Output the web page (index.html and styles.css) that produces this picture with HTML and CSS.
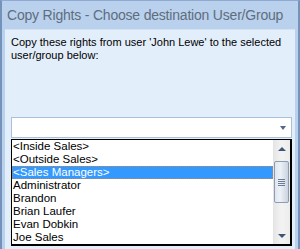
FILE: index.html
```html
<!DOCTYPE html>
<html lang="en">
<head>
    <meta charset="UTF-8">
    <title>Copy Rights</title>
    <link rel="stylesheet" href="styles.css">
</head>
<body>
<div class="window">
    <div class="titlebar">Copy Rights - Choose destination User/Group</div>

    <div class="panel">
        <p class="prompt">Copy these rights from user 'John Lewe' to the selected user/group below:</p>

        <!-- Filter box -->
        <div class="combo">
            <span class="combo-arrow"></span>
        </div>

        <!-- Users and groups -->
        <div class="listbox">
            <div class="items">
                <div class="item">&lt;Inside Sales&gt;</div>
                <div class="item">&lt;Outside Sales&gt;</div>
                <div class="item selected">&lt;Sales Managers&gt;</div>
                <div class="item">Administrator</div>
                <div class="item">Brandon</div>
                <div class="item">Brian Laufer</div>
                <div class="item">Evan Dobkin</div>
                <div class="item">Joe Sales</div>
            </div>
            <div class="scrollbar">
                <span class="scroll-btn up"></span>
                <div class="track">
                    <div class="thumb">
                        <span class="grip"></span>
                    </div>
                </div>
                <span class="scroll-btn down"></span>
            </div>
        </div>
    </div>
</div>
</body>
</html>
```

FILE: styles.css
```css
body {
    margin: 0;
    width: 300px;
    height: 249px;
    overflow: hidden;
    background-color: #b9d1ec;
}
.window {
    height: 249px;
    box-sizing: border-box;
    border-left: 2px solid #7592bb;
    border-right: 2px solid #7592bb;
    border-top: 1px solid #8eaad0;
    background-color: #b9d1ec;
    padding: 0 3px;
}
.titlebar {
    height: 28px;
    box-sizing: border-box;
    padding: 6px 0 0 2px;
    font-family: "Liberation Sans", Arial, sans-serif;
    font-size: 14px;
    letter-spacing: -0.2px;
    color: #5f6d80;
    white-space: nowrap;
}
.panel {
    height: 220px;
    box-sizing: border-box;
    background-color: #e3eefb;
    border-top: 1px solid #d4e2f4;
    padding: 6px 3px 0 6px;
    font-family: "Liberation Sans", Arial, sans-serif;
    font-size: 11px;
    color: #000;
}
.prompt {
    margin: 0;
    line-height: 13px;
    height: 81px;
}
.combo {
    height: 19px;
    background-color: #fff;
    border: 1px solid #abc0db;
    position: relative;
}
.combo-arrow {
    position: absolute;
    right: 5px;
    top: 8px;
    border-left: 3px solid transparent;
    border-right: 3px solid transparent;
    border-top: 4px solid #4d6a8e;
}
.listbox {
    margin-top: 1px;
    height: 104px;
    display: flex;
    background-color: #fff;
    border: 1px solid #000;
    border-right-width: 2px;
    border-bottom-width: 2px;
}
.items {
    flex: 1;
    font-family: "Liberation Sans", Arial, sans-serif;
    font-size: 11.5px;
}
.item {
    height: 13px;
    line-height: 13px;
    padding-left: 1px;
    white-space: nowrap;
}
.item.selected {
    background-color: #3399ff;
    color: #fff;
    outline: 1px dotted #b9895a;
    outline-offset: -1px;
}
.scrollbar {
    width: 17px;
    display: flex;
    flex-direction: column;
    background: linear-gradient(to right, #e4e4e4, #f3f3f3 50%, #ececec);
}
.scroll-btn {
    height: 17px;
    display: flex;
    align-items: center;
    justify-content: center;
}
.scroll-btn::before {
    content: "";
    border-left: 4px solid transparent;
    border-right: 4px solid transparent;
}
.scroll-btn.up::before {
    border-bottom: 4px solid #3b5677;
}
.scroll-btn.down::before {
    border-top: 4px solid #3b5677;
}
.track {
    flex: 1;
    padding: 4px 1px 0 1px;
}
.thumb {
    height: 42px;
    box-sizing: border-box;
    border: 1px solid #8c9cb3;
    border-radius: 2px;
    background: linear-gradient(to right, #dfe6ef, #eef2f7 40%, #c9d3e0);
    display: flex;
    align-items: center;
    justify-content: center;
}
.grip {
    width: 7px;
    height: 7px;
    background: repeating-linear-gradient(to bottom, #6b7d96 0, #6b7d96 1px, transparent 1px, transparent 2px);
}
```
